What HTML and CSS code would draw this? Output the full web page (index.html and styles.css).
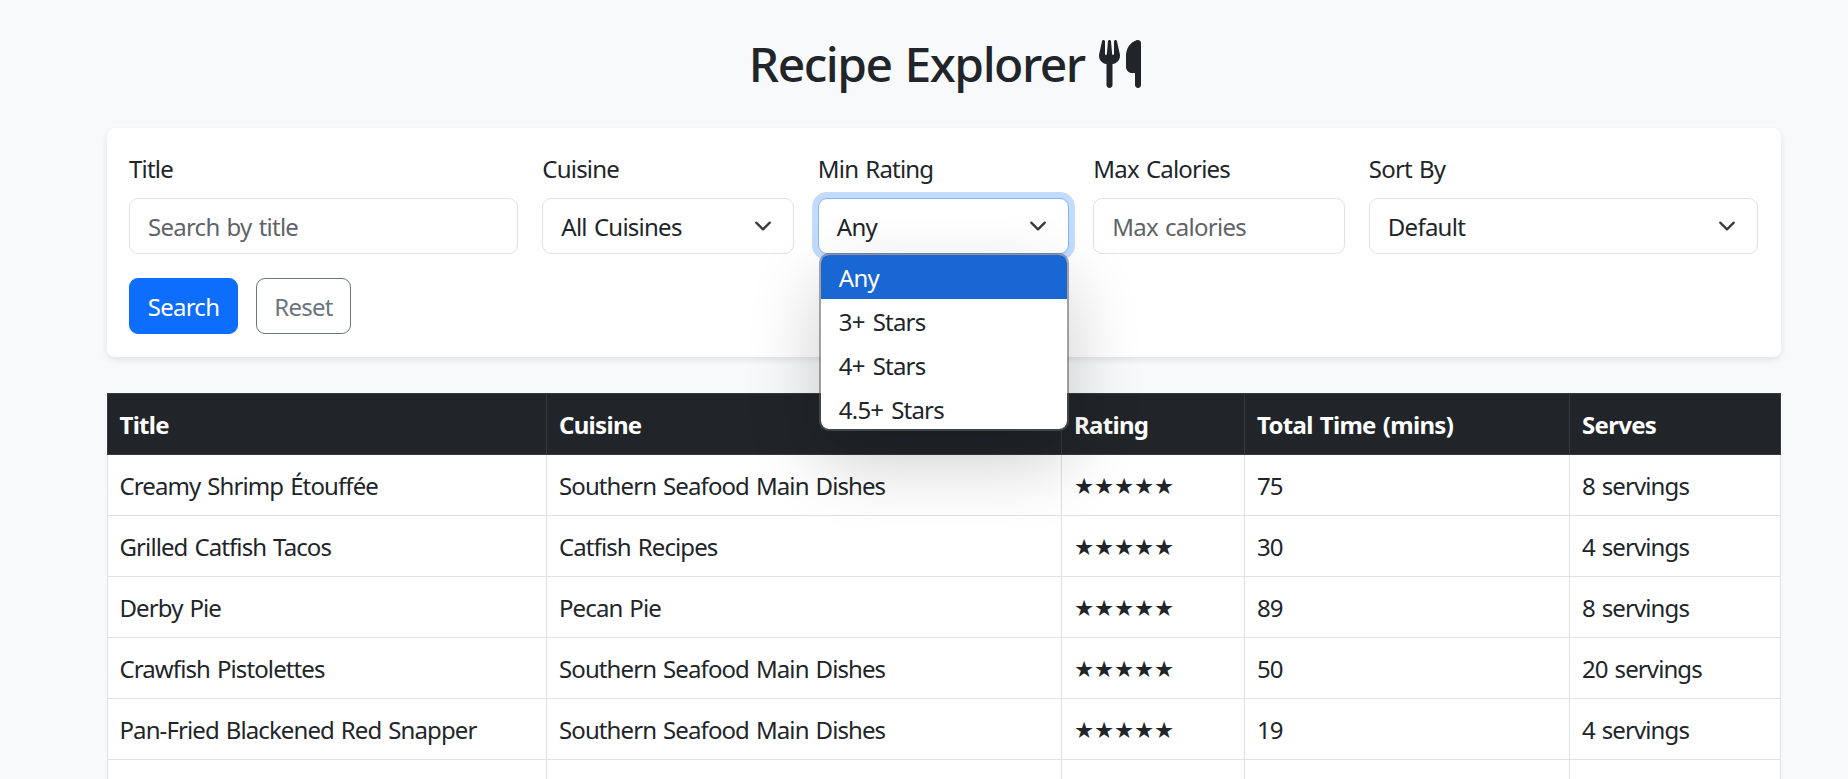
FILE: index.html
```html
<!DOCTYPE html>
<html lang="en">
<head>
<meta charset="utf-8">
<title>Recipe Explorer</title>
<link rel="stylesheet" href="styles.css">
</head>
<body>
<main class="container">
  <h1 class="heading"><span>Recipe Explorer</span>
    <svg class="utensils" viewBox="0 0 448 512" aria-hidden="true"><path d="M416 0C400 0 288 32 288 176V288c0 35.3 28.7 64 64 64h32V480c0 17.7 14.3 32 32 32s32-14.3 32-32V352 240 32c0-17.7-14.3-32-32-32zM64 16C64 7.8 57.9 1 49.7 .1S34.2 4.6 32.4 12.5L2.1 148.8C.7 155.1 0 161.5 0 167.9c0 45.9 35.1 83.6 80 87.7V480c0 17.7 14.3 32 32 32s32-14.3 32-32V255.6c44.9-4.1 80-41.8 80-87.7c0-6.4-.7-12.8-2.1-19.1L191.6 12.5c-1.8-8-9.3-13.3-17.4-12.4S160 7.8 160 16V150.2c0 5.4-4.4 9.8-9.8 9.8c-5.1 0-9.3-3.9-9.8-9L127.9 14.6C127.2 6.3 120.3 0 112 0s-15.2 6.3-15.9 14.6L83.7 151c-.5 5.1-4.7 9-9.8 9c-5.4 0-9.8-4.4-9.8-9.8V16z"/></svg>
  </h1>

  <form class="filters">
    <div class="fields">
      <div class="field">
        <label class="label" for="title">Title</label>
        <input class="control" id="title" type="text" placeholder="Search by title">
      </div>
      <div class="field">
        <span class="label">Cuisine</span>
        <div class="control select">All Cuisines<svg class="chevron" viewBox="0 0 16 16"><path d="m2 5 6 6 6-6"/></svg></div>
      </div>
      <div class="field">
        <span class="label">Min Rating</span>
        <div class="control select focused">Any<svg class="chevron" viewBox="0 0 16 16"><path d="m2 5 6 6 6-6"/></svg></div>
        <ul class="menu">
          <li class="option active">Any</li>
          <li class="option">3+ Stars</li>
          <li class="option">4+ Stars</li>
          <li class="option">4.5+ Stars</li>
        </ul>
      </div>
      <div class="field">
        <label class="label" for="calories">Max Calories</label>
        <input class="control" id="calories" type="text" placeholder="Max calories">
      </div>
      <div class="field">
        <span class="label">Sort By</span>
        <div class="control select">Default<svg class="chevron" viewBox="0 0 16 16"><path d="m2 5 6 6 6-6"/></svg></div>
      </div>
    </div>
    <div class="actions">
      <button class="btn btn-primary" type="button">Search</button>
      <button class="btn btn-outline" type="button">Reset</button>
    </div>
  </form>

  <table class="recipes">
    <colgroup><col class="c-title"><col class="c-cuisine"><col class="c-rating"><col class="c-time"><col class="c-serves"></colgroup>
    <thead>
      <tr><th>Title</th><th>Cuisine</th><th>Rating</th><th>Total Time (mins)</th><th>Serves</th></tr>
    </thead>
    <tbody>
      <tr><td>Creamy Shrimp Étouffée</td><td>Southern Seafood Main Dishes</td><td><span class="stars">★★★★★</span></td><td>75</td><td>8 servings</td></tr>
      <tr><td>Grilled Catfish Tacos</td><td>Catfish Recipes</td><td><span class="stars">★★★★★</span></td><td>30</td><td>4 servings</td></tr>
      <tr><td>Derby Pie</td><td>Pecan Pie</td><td><span class="stars">★★★★★</span></td><td>89</td><td>8 servings</td></tr>
      <tr><td>Crawfish Pistolettes</td><td>Southern Seafood Main Dishes</td><td><span class="stars">★★★★★</span></td><td>50</td><td>20 servings</td></tr>
      <tr><td>Pan-Fried Blackened Red Snapper</td><td>Southern Seafood Main Dishes</td><td><span class="stars">★★★★★</span></td><td>19</td><td>4 servings</td></tr>
      <tr><td></td><td></td><td></td><td></td><td></td></tr>
    </tbody>
  </table>
</main>
</body>
</html>
```
FILE: styles.css
```css
* { box-sizing: border-box; }

body {
  margin: 0;
  height: 779px;
  overflow: hidden;
  background: #f8f9fb;
  color: #212529;
  font-family: "Noto Sans", "Open Sans", sans-serif;
  font-size: 24px;
  line-height: 37px;
  letter-spacing: -0.9px;
  word-spacing: 1.6px;
}

.container {
  width: 1674px;
  height: 779px;
  margin-left: 107px;
  padding-top: 34px;
}

.heading {
  display: flex;
  justify-content: center;
  align-items: center;
  gap: 14.5px;
  height: 60px;
  margin: 0 0 34px;
  padding-left: 2px;
  font-size: 48px;
  font-weight: 500;
  line-height: 60px;
  letter-spacing: -1.5px;
  word-spacing: 2px;
}
.utensils { width: 42px; height: 48px; fill: currentColor; }

.filters {
  height: 229px;
  padding: 22px 23px 22px 22px;
  background: #fff;
  border-radius: 8px;
  box-shadow: 0 3px 6px rgba(0, 0, 0, .09);
}
.fields {
  display: grid;
  grid-template-columns: 389fr 251.2fr 251.2fr 251.2fr 389fr;
  column-gap: 24.2px;
}
.field { position: relative; }
.label { display: block; margin-bottom: 11px; letter-spacing: -0.8px; }
.control {
  display: block;
  width: 100%;
  height: 56px;
  padding: 1px 18px 0;
  border: 1px solid #dee2e6;
  border-radius: 9px;
  background: #fff;
  color: #212529;
  font: inherit;
  letter-spacing: -0.75px;
  word-spacing: inherit;
}
.control::placeholder { color: #5f6469; opacity: 1; }
.select { display: flex; align-items: center; justify-content: space-between; }
.chevron {
  width: 18px;
  height: 18px;
  margin: 0 3px 2px 0;
  fill: none;
  stroke: #343a40;
  stroke-width: 2;
  stroke-linecap: round;
  stroke-linejoin: round;
}
.focused { border-color: #86b7fe; box-shadow: 0 0 0 6px #c2dbff; }

.menu {
  position: absolute;
  z-index: 2;
  top: 103px;
  left: 1px;
  width: 250px;
  height: 178px;
  margin: 0;
  padding: 0;
  overflow: hidden;
  list-style: none;
  background: #fff;
  background-clip: padding-box;
  border: 2px solid rgba(95, 95, 95, .56);
  border-radius: 10px;
  box-shadow: 0 30px 72px rgba(0, 0, 0, .2);
}
.option {
  height: 44px;
  padding-left: 18px;
  line-height: 46px;
  letter-spacing: -0.8px;
  word-spacing: 2.5px;
}
.active { background: #1967d2; color: #fff; }

.actions { display: flex; gap: 18px; margin-top: 24px; }
.btn {
  height: 56px;
  padding: 1px 0 0;
  border: 1px solid;
  border-radius: 9px;
  font: inherit;
  letter-spacing: -0.75px;
}
.btn-primary { width: 109px; background: #0d6efd; border-color: #0d6efd; color: #fff; }
.btn-outline { width: 95px; background: #fff; border-color: #6c757d; color: #6c757d; }

.recipes {
  width: 1674px;
  margin-top: 36px;
  table-layout: fixed;
  border-collapse: collapse;
  background: #fff;
}
.c-title { width: 439px; }
.c-cuisine { width: 515px; }
.c-rating { width: 183px; }
.c-time { width: 325px; }
.recipes th, .recipes td {
  height: 61px;
  padding: 1px 12px 0;
  border: 1px solid #dee2e6;
  text-align: left;
  white-space: nowrap;
}
.recipes th:first-child, .recipes td:first-child { padding-left: 11.5px; }
.recipes th {
  background: #212529;
  border-color: #373b3e;
  color: #fff;
  font-weight: 700;
  letter-spacing: -0.7px;
}
.stars {
  display: block;
  padding-top: 2px;
  font-family: "DejaVu Sans", sans-serif;
  font-size: 22.5px;
  line-height: 35px;
  letter-spacing: -0.15px;
}
```
